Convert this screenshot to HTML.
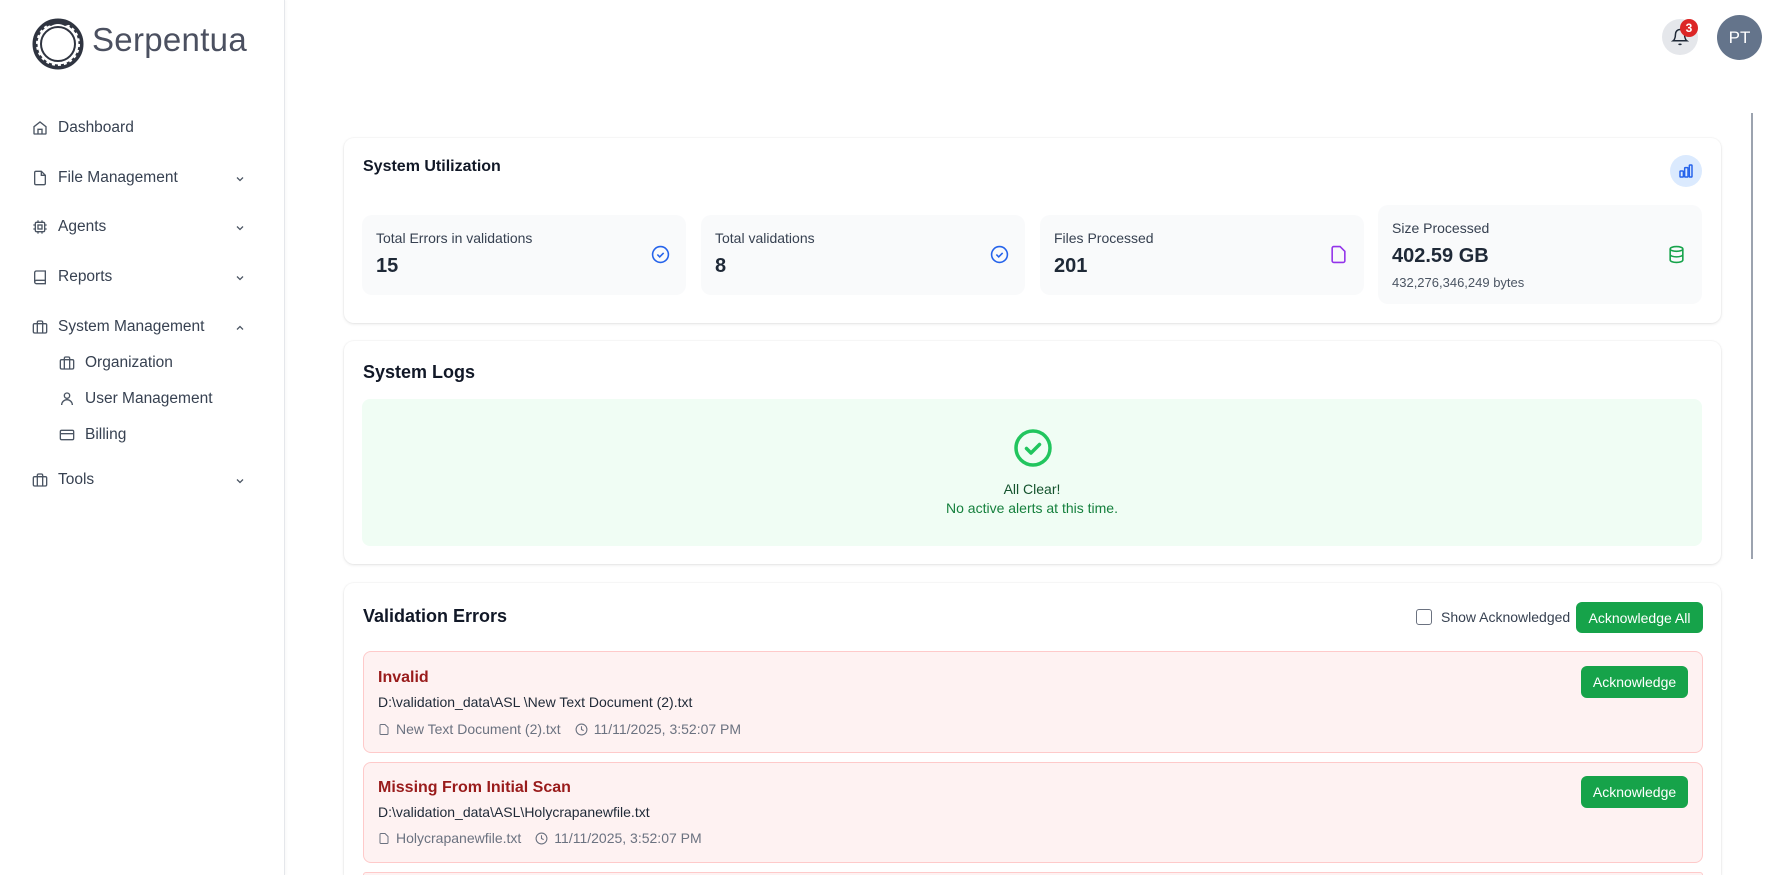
<!DOCTYPE html>
<html style="width:1765px;height:875px;overflow:hidden"><head><meta charset="utf-8"><style>
*{box-sizing:border-box;margin:0;padding:0}
body{width:1765px;height:875px;overflow:hidden;background:#fff;font-family:"Liberation Sans",Arial,sans-serif;color:#1f2937;position:relative}
.abs{position:absolute}
.side{position:absolute;left:0;top:0;width:285px;height:875px;border-right:1px solid #e5e7eb;box-shadow:1px 0 3px rgba(0,0,0,.04)}
.nav{position:absolute;left:32px;font-size:15.5px;color:#374151;display:flex;align-items:center;height:20px}
.nav svg{margin-right:10px}
.chev{position:absolute;left:234px}
.card{position:absolute;left:344px;width:1377px;background:#fff;border-radius:10px;box-shadow:0 1px 3px rgba(0,0,0,.1),0 0 0 1px rgba(0,0,0,.02)}
.stat{position:absolute;background:#f9fafb;border-radius:10px}
.stat .l{position:absolute;left:14px;font-size:14px;color:#374151}
.stat .v{position:absolute;left:14px;font-size:20px;font-weight:bold;color:#1f2937}
.btn{position:absolute;background:#16a34a;color:#fff;font-size:14px;border-radius:6px;display:flex;align-items:center;justify-content:center}
.err{position:absolute;left:363px;width:1340px;background:#fef2f2;border:1px solid #fecaca;border-radius:8px}
.err .t{position:absolute;left:14px;font-size:16px;font-weight:bold;color:#991b1b}
.err .p{position:absolute;left:14px;font-size:14px;color:#1f2937}
.err .m{position:absolute;left:14px;font-size:14px;color:#6b7280;display:flex;align-items:center}
</style></head><body>
<div class="side">
 <svg class="abs" style="left:31px;top:14px" width="54" height="58" viewBox="0 0 54 58"><circle cx="27" cy="30" r="23" fill="none" stroke="#2f3440" stroke-width="5"/><circle cx="27" cy="30" r="21" fill="none" stroke="#fff" stroke-width="2" stroke-dasharray="3 3"/><circle cx="27" cy="30" r="17" fill="none" stroke="#2f3440" stroke-width="2"/><path d="M14 10 Q27 1 40 10 L34 12 Q27 8 20 12Z" fill="#2f3440"/></svg>
 <div class="abs" style="left:92px;top:21px;font-size:33px;color:#4b5060;letter-spacing:.3px">Serpentua</div>
 <div class="nav" style="top:118px"><svg width="16" height="16" viewBox="0 0 24 24" fill="none" stroke="#4b5563" stroke-width="2"><path d="M3 10l9-7 9 7v10a1 1 0 0 1-1 1H4a1 1 0 0 1-1-1z"/><path d="M9 21v-7h6v7"/></svg>Dashboard</div>
 <div class="nav" style="top:168px"><svg width="16" height="16" viewBox="0 0 24 24" fill="none" stroke="#4b5563" stroke-width="2"><path d="M14 2H6a2 2 0 0 0-2 2v16a2 2 0 0 0 2 2h12a2 2 0 0 0 2-2V8z"/><path d="M14 2v6h6"/></svg>File Management</div>
 <div class="nav" style="top:217px"><svg width="16" height="16" viewBox="0 0 24 24" fill="none" stroke="#4b5563" stroke-width="2"><rect x="5" y="5" width="14" height="14" rx="2"/><rect x="9" y="9" width="6" height="6"/><path d="M9 2v3M15 2v3M9 19v3M15 19v3M2 9h3M2 15h3M19 9h3M19 15h3"/></svg>Agents</div>
 <div class="nav" style="top:267px"><svg width="16" height="16" viewBox="0 0 24 24" fill="none" stroke="#4b5563" stroke-width="2"><path d="M4 19.5A2.5 2.5 0 0 1 6.5 17H20V3H6.5A2.5 2.5 0 0 0 4 5.5z"/><path d="M4 19.5A2.5 2.5 0 0 0 6.5 22H20v-5"/></svg>Reports</div>
 <div class="nav" style="top:317px"><svg width="16" height="16" viewBox="0 0 24 24" fill="none" stroke="#4b5563" stroke-width="2"><rect x="2" y="7" width="20" height="14" rx="2"/><path d="M16 21V5a2 2 0 0 0-2-2h-4a2 2 0 0 0-2 2v16"/></svg>System Management</div>
 <div class="nav" style="top:353px;left:59px"><svg width="16" height="16" viewBox="0 0 24 24" fill="none" stroke="#4b5563" stroke-width="2"><rect x="2" y="7" width="20" height="14" rx="2"/><path d="M16 21V5a2 2 0 0 0-2-2h-4a2 2 0 0 0-2 2v16"/></svg>Organization</div>
 <div class="nav" style="top:389px;left:59px"><svg width="16" height="16" viewBox="0 0 24 24" fill="none" stroke="#4b5563" stroke-width="2"><circle cx="12" cy="7" r="4"/><path d="M4 21a8 8 0 0 1 16 0"/></svg>User Management</div>
 <div class="nav" style="top:425px;left:59px"><svg width="16" height="16" viewBox="0 0 24 24" fill="none" stroke="#4b5563" stroke-width="2"><rect x="2" y="5" width="20" height="14" rx="2"/><path d="M2 10h20"/></svg>Billing</div>
 <div class="nav" style="top:470px"><svg width="16" height="16" viewBox="0 0 24 24" fill="none" stroke="#4b5563" stroke-width="2"><rect x="2" y="7" width="20" height="14" rx="2"/><path d="M16 21V5a2 2 0 0 0-2-2h-4a2 2 0 0 0-2 2v16"/></svg>Tools</div>
 <svg class="chev" style="top:173px" width="12" height="12" viewBox="0 0 24 24" fill="none" stroke="#4b5563" stroke-width="2.5"><path d="M6 9l6 6 6-6"/></svg>
 <svg class="chev" style="top:222px" width="12" height="12" viewBox="0 0 24 24" fill="none" stroke="#4b5563" stroke-width="2.5"><path d="M6 9l6 6 6-6"/></svg>
 <svg class="chev" style="top:272px" width="12" height="12" viewBox="0 0 24 24" fill="none" stroke="#4b5563" stroke-width="2.5"><path d="M6 9l6 6 6-6"/></svg>
 <svg class="chev" style="top:322px" width="12" height="12" viewBox="0 0 24 24" fill="none" stroke="#4b5563" stroke-width="2.5"><path d="M6 15l6-6 6 6"/></svg>
 <svg class="chev" style="top:475px" width="12" height="12" viewBox="0 0 24 24" fill="none" stroke="#4b5563" stroke-width="2.5"><path d="M6 9l6 6 6-6"/></svg>
</div>
<div class="abs" style="left:1662px;top:19px;width:36px;height:36px;border-radius:50%;background:#e5e7eb"></div>
<svg class="abs" style="left:1671px;top:28px" width="18" height="18" viewBox="0 0 24 24" fill="none" stroke="#1f2937" stroke-width="2"><path d="M6 8a6 6 0 0 1 12 0c0 7 3 9 3 9H3s3-2 3-9"/><path d="M10.3 21a1.9 1.9 0 0 0 3.4 0"/></svg>
<div class="abs" style="left:1680px;top:19px;width:18px;height:18px;border-radius:50%;background:#dc2626;color:#fff;font-size:12px;font-weight:bold;text-align:center;line-height:18px">3</div>
<div class="abs" style="left:1717px;top:15px;width:45px;height:45px;border-radius:50%;background:#64748b;color:#fff;font-size:17px;text-align:center;line-height:45px">PT</div>
<div class="abs" style="left:1751px;top:113px;width:2px;height:446px;background:#9ca3af"></div>

<div class="card" style="top:138px;height:185px">
 <div class="abs" style="left:19px;top:20px;font-size:16px;font-weight:bold;color:#111827">System Utilization</div>
 <div class="abs" style="left:1326px;top:17px;width:32px;height:32px;border-radius:50%;background:#dbeafe"></div>
 <svg class="abs" style="left:1334px;top:25px" width="16" height="16" viewBox="0 0 24 24" fill="none" stroke="#2563eb" stroke-width="2.2"><rect x="3" y="12" width="5" height="9" rx="1"/><rect x="10" y="7" width="5" height="14" rx="1"/><rect x="17" y="3" width="4" height="18" rx="1"/></svg>
</div>
<div class="stat" style="left:362px;top:215px;width:324px;height:80px"><div class="l" style="top:15px">Total Errors in validations</div><div class="v" style="top:40px">15</div>
 <svg class="abs" style="left:289px;top:30px" width="19" height="19" viewBox="0 0 24 24" fill="none" stroke="#2563eb" stroke-width="2"><circle cx="12" cy="12" r="10"/><path d="M8 12l3 3 5-5"/></svg></div>
<div class="stat" style="left:701px;top:215px;width:324px;height:80px"><div class="l" style="top:15px">Total validations</div><div class="v" style="top:40px">8</div>
 <svg class="abs" style="left:289px;top:30px" width="19" height="19" viewBox="0 0 24 24" fill="none" stroke="#2563eb" stroke-width="2"><circle cx="12" cy="12" r="10"/><path d="M8 12l3 3 5-5"/></svg></div>
<div class="stat" style="left:1040px;top:215px;width:324px;height:80px"><div class="l" style="top:15px">Files Processed</div><div class="v" style="top:40px">201</div>
 <svg class="abs" style="left:289px;top:30px" width="19" height="19" viewBox="0 0 24 24" fill="none" stroke="#9333ea" stroke-width="2"><path d="M14 2H6a2 2 0 0 0-2 2v16a2 2 0 0 0 2 2h12a2 2 0 0 0 2-2V8z"/></svg></div>
<div class="stat" style="left:1378px;top:205px;width:324px;height:99px"><div class="l" style="top:15px">Size Processed</div><div class="v" style="top:40px">402.59 GB</div><div class="l" style="top:70px;font-size:13px;color:#4b5563">432,276,346,249 bytes</div>
 <svg class="abs" style="left:289px;top:40px" width="19" height="19" viewBox="0 0 24 24" fill="none" stroke="#16a34a" stroke-width="2"><ellipse cx="12" cy="5" rx="8" ry="3"/><path d="M4 5v14c0 1.7 3.6 3 8 3s8-1.3 8-3V5M4 12c0 1.7 3.6 3 8 3s8-1.3 8-3"/></svg></div>

<div class="card" style="top:341px;height:223px">
 <div class="abs" style="left:19px;top:21px;font-size:18px;font-weight:bold;color:#111827">System Logs</div>
 <div class="abs" style="left:18px;top:58px;width:1340px;height:147px;background:#f0fdf4;border-radius:8px">
  <svg class="abs" style="left:651px;top:29px" width="40" height="40" viewBox="0 0 40 40" fill="none" stroke="#22c55e" stroke-width="3.5"><circle cx="20" cy="20" r="17"/><path d="M13.5 20.5l4.5 4.5 8.5-8.5" stroke-linecap="round" stroke-linejoin="round"/></svg>
  <div class="abs" style="left:0;width:100%;top:82px;text-align:center;font-size:14px;color:#14532d">All Clear!</div>
  <div class="abs" style="left:0;width:100%;top:101px;text-align:center;font-size:14px;color:#15803d">No active alerts at this time.</div>
 </div>
</div>

<div class="card" style="top:583px;height:292px;border-radius:10px 10px 0 0">
 <div class="abs" style="left:19px;top:23px;font-size:18px;font-weight:bold;color:#111827">Validation Errors</div>
 <div class="abs" style="left:1072px;top:26px;width:16px;height:16px;border:1.5px solid #6b7280;border-radius:3px"></div>
 <div class="abs" style="left:1097px;top:26px;font-size:14px;color:#374151">Show Acknowledged</div>
</div>
<div class="btn" style="left:1576px;top:602px;width:127px;height:31px">Acknowledge All</div>
<div class="err" style="top:651px;height:102px">
 <div class="t" style="top:17px">Invalid</div>
 <div class="p" style="top:42px">D:\validation_data\ASL \New Text Document (2).txt</div>
 <div class="m" style="top:69px"><svg width="12" height="13" viewBox="0 0 24 24" fill="none" stroke="#6b7280" stroke-width="2" style="margin-right:6px"><path d="M14 2H6a2 2 0 0 0-2 2v16a2 2 0 0 0 2 2h12a2 2 0 0 0 2-2V8z"/></svg>New Text Document (2).txt<svg width="13" height="13" viewBox="0 0 24 24" fill="none" stroke="#6b7280" stroke-width="2" style="margin:0 6px 0 14px"><circle cx="12" cy="12" r="10"/><path d="M12 6v6l4 2"/></svg>11/11/2025, 3:52:07 PM</div>
 <div class="btn" style="left:1217px;top:14px;width:107px;height:32px">Acknowledge</div>
</div>
<div class="err" style="top:762px;height:101px">
 <div class="t" style="top:16px">Missing From Initial Scan</div>
 <div class="p" style="top:41px">D:\validation_data\ASL\Holycrapanewfile.txt</div>
 <div class="m" style="top:67px"><svg width="12" height="13" viewBox="0 0 24 24" fill="none" stroke="#6b7280" stroke-width="2" style="margin-right:6px"><path d="M14 2H6a2 2 0 0 0-2 2v16a2 2 0 0 0 2 2h12a2 2 0 0 0 2-2V8z"/></svg>Holycrapanewfile.txt<svg width="13" height="13" viewBox="0 0 24 24" fill="none" stroke="#6b7280" stroke-width="2" style="margin:0 6px 0 14px"><circle cx="12" cy="12" r="10"/><path d="M12 6v6l4 2"/></svg>11/11/2025, 3:52:07 PM</div>
 <div class="btn" style="left:1217px;top:13px;width:107px;height:32px">Acknowledge</div>
</div>
<div class="err" style="top:872px;height:3px;border-bottom:none;border-radius:8px 8px 0 0"></div>
</body></html>
